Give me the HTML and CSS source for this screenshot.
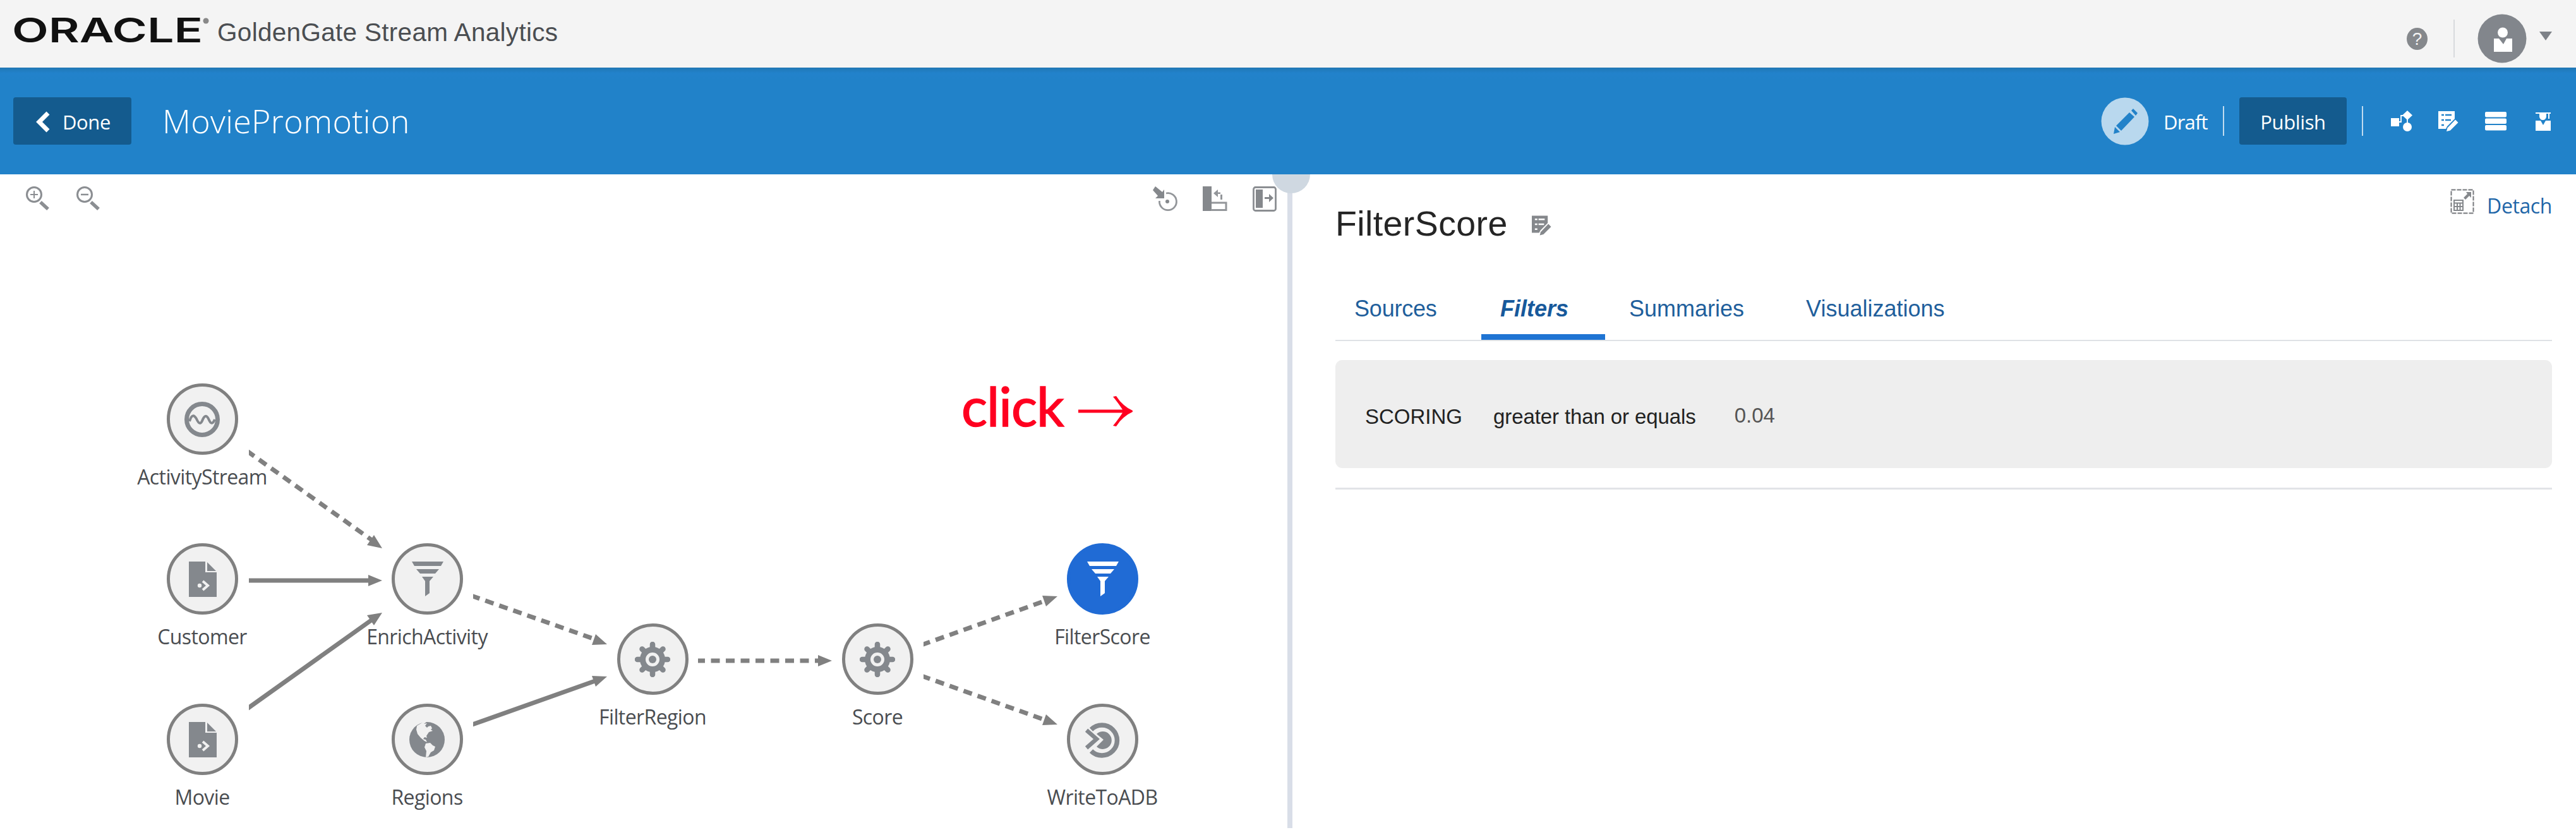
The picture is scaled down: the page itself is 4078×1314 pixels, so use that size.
FILE: index.html
```html
<!DOCTYPE html>
<html lang="en">
<head>
<meta charset="utf-8">
<title>GoldenGate Stream Analytics</title>
<link rel="stylesheet" href="styles.css">
</head>
<body>
<svg class="defs" width="0" height="0" aria-hidden="true">
  <symbol id="file" viewBox="-28 -28 56 56">
    <path d="M-21-28H5V-11H23V28H-21Z" fill="currentColor"/><path d="M8-27L22-13H8Z" fill="currentColor"/>
    <path d="M6.500-28V-12H23" fill="none" stroke="#f1f1f1" stroke-width="2"/><path d="M8-28H24V-13Z" fill="#f1f1f1"/>
    <circle cx="-4" cy="10" r="3.200" fill="#f1f1f1"/><path d="M1 3L9 10L1 17" fill="none" stroke="#f1f1f1" stroke-width="4"/>
  </symbol>
  <symbol id="funnel" viewBox="-28 -28 56 56">
    <path d="M-24-28H26L22-21H-20ZM-17-16H19L13-9H-11ZM-8-4H10L4 3V22L-3 27V3Z" fill="currentColor"/>
  </symbol>
  <symbol id="gear" viewBox="-28 -28 56 56">
    <g stroke="currentColor" stroke-width="8.500" stroke-linecap="round"><path d="M0-24V-16M0 24V16M-24 0H-16M24 0H16M-16.500-16.500L-12-12M16.500 16.500L12 12M-16.500 16.500L-12 12M16.500-16.500L12-12"/></g>
    <circle r="15.500" fill="none" stroke="currentColor" stroke-width="9"/><circle r="6" fill="currentColor"/>
  </symbol>
  <symbol id="form" viewBox="0 0 32 33">
    <path d="M0 1H26V13L14 25L12 29H0Z" fill="currentColor"/>
    <path d="M27 14.500L31.500 19L19 31.500L13 33L14.500 27.500Z" fill="currentColor"/>
    <path class="cut" d="M5 7H9M11 7H21M5 15H9M11 15H20M5 23H9" fill="none" stroke-width="2.600"/>
  </symbol>
</svg>

<header class="masthead">
  <svg class="brand" viewBox="0 0 316 60" role="img" aria-label="Oracle">
    <text x="-2" y="48" textLength="302" lengthAdjust="spacingAndGlyphs">ORACLE</text>
    <circle cx="305" cy="14" r="4.500"/>
  </svg>
  <h1 class="product">GoldenGate Stream Analytics</h1>
  <div class="account">
    <span class="help">?</span>
    <span class="rule"></span>
    <svg class="avatar" viewBox="0 0 78 78"><circle cx="39" cy="39" r="38.500" fill="#82868c"/><circle cx="40" cy="29.500" r="8" fill="#fff"/><path d="M26 39H34L41 48L46 39H55V60H26Z" fill="#fff"/></svg>
    <svg class="caret" viewBox="0 0 20 14"><path d="M0 0H20L10 14Z" fill="#7d8187"/></svg>
  </div>
</header>

<div class="titlebar">
  <button class="btn done"><svg class="chevron" viewBox="0 0 24 34"><path d="M20 3L6 17L20 31" fill="none" stroke="#fff" stroke-width="7"/></svg><span>Done</span></button>
  <h2 class="pipeline">MoviePromotion</h2>
  <div class="tools">
    <svg class="draft-icon" viewBox="0 0 76 76"><circle cx="38" cy="38" r="37.500" fill="#b9d8ee"/><path d="M45 24L53 31L32 53L24 45ZM48 21L51 18L58 25L55 29ZM22 47L30 55L20 58Z" fill="#2282c9"/></svg>
    <span class="draft">Draft</span>
    <span class="rule"></span>
    <button class="btn publish">Publish</button>
    <span class="rule second"></span>
    <svg class="tool topology" viewBox="0 0 34 34"><path d="M0 12H13V25H0Z" fill="#fff"/><path d="M26 0L34 7.500L26 15L18 7.500Z" fill="#fff"/><circle cx="26" cy="26" r="7" fill="#fff"/><path d="M12 18H16V8H22M26 12V22" fill="none" stroke="#fff" stroke-width="1.800"/></svg>
    <svg class="tool form"><use href="#form"/></svg>
    <svg class="tool rows" viewBox="0 0 34 30"><g fill="#fff"><rect width="34" height="8.500" rx="2"/><rect y="10.500" width="34" height="8.500" rx="2"/><rect y="21" width="34" height="8.500" rx="2"/></g></svg>
    <svg class="tool grad" viewBox="0 0 24 30"><path d="M0 1H24V3H0ZM6 3H17V8Q16 13 11.500 13Q7 13 6 8ZM20 3H22V11H20Z" fill="#fff"/><path d="M0 14H8L12 21L16 14H24V30H0Z" fill="#fff"/></svg>
  </div>
</div>

<main class="workspace">
  <section class="canvas">
    <div class="toolbar">
      <svg class="zoom" viewBox="0 0 38 40"><circle cx="13" cy="13" r="11.500" fill="none" stroke="#8b8e92" stroke-width="3"/><path d="M23 25L35 36" stroke="#8b8e92" stroke-width="5.500"/><path d="M13 7V19M7 13H19" stroke="#8b8e92" stroke-width="2"/></svg>
      <svg class="zoom" viewBox="0 0 38 40"><circle cx="13" cy="13" r="11.500" fill="none" stroke="#8b8e92" stroke-width="3"/><path d="M23 25L35 36" stroke="#8b8e92" stroke-width="5.500"/><path d="M7 13H19" stroke="#8b8e92" stroke-width="2.500"/></svg>
      <div class="layout-tools">
        <svg viewBox="0 0 38 40"><path d="M21 11A13.500 13.500 0 1 1 10.500 23" fill="none" stroke="#93969a" stroke-width="2.800"/><circle cx="23" cy="24" r="3" fill="#85888c"/><path d="M4 0L15 9L18 5V19H4L8 15L0 6Z" fill="#85888c"/></svg>
        <svg viewBox="0 0 38 40"><path d="M0 0H14V39H0Z" fill="#85888c"/><path d="M14 26H37V37.500H13" fill="none" stroke="#93969a" stroke-width="3"/><path d="M24 5V17L17 11ZM23 9.500H28V12H23ZM28 13H31V21H28Z" fill="#93969a"/></svg>
        <svg viewBox="0 0 38 40"><rect x="1.500" y="1.500" width="35" height="37" rx="3" fill="none" stroke="#8b8e92" stroke-width="2.800"/><path d="M5 5H16V34H5Z" fill="#85888c"/><path d="M19 17H26V12L33 18.500L26 25V20H19Z" fill="#85888c"/></svg>
      </div>
    </div>

    <svg class="edges" viewBox="0 276 2038 1038">
      <clipPath id="columns"><path d="M394 560H606V1314H394ZM749 560H962V1314H749ZM1105 560H1318V1314H1105ZM1462 560H1675V1314H1462Z"/></clipPath>
      <g clip-path="url(#columns)" fill="none" stroke="#808080" stroke-width="7">
        <g stroke-dasharray="14 9.500">
          <path d="M391 714L590 856"/><path d="M746 943L942 1012"/><path stroke-dashoffset="3" d="M1105 1046H1300"/><path d="M1459 1021L1655 951"/><path d="M1459 1070L1655 1140"/>
        </g>
        <path d="M394 919H588M390 1123L589 981M745 1148L942 1078"/>
        <g stroke="none" fill="#808080">
          <path d="M605 868L581 863L592 847ZM605 919L583 910V928ZM605 970L592 990L581 974ZM961 1020L937 1021L943 1004ZM961 1071L943 1087L937 1070ZM1317 1046L1295 1037V1055ZM1674 944L1656 960L1650 943ZM1674 1147L1650 1148L1656 1131Z"/>
        </g>
      </g>
    </svg>

    <div class="node activity"><span class="disc"><svg viewBox="-28 -28 56 56"><circle r="24.500" fill="none" stroke="currentColor" stroke-width="7"/><path d="M-20 3C-16-10-12-6-9-1C-5 8-2 8 1 0C5-8 8-6 11 1C14 8 17 7 20 0" fill="none" stroke="currentColor" stroke-width="4"/></svg></span><span class="name">ActivityStream</span></div>
    <div class="node customer"><span class="disc"><svg><use href="#file"/></svg></span><span class="name">Customer</span></div>
    <div class="node movie"><span class="disc"><svg><use href="#file"/></svg></span><span class="name">Movie</span></div>
    <div class="node enrich"><span class="disc"><svg><use href="#funnel"/></svg></span><span class="name">EnrichActivity</span></div>
    <div class="node regions"><span class="disc"><svg viewBox="-28 -28 56 56"><circle r="28" fill="currentColor"/><path d="M-16-22L-6-28L-1-28L-5-25L0-26L-3-22L0-19L2-21L6-22L8-18L6-16L9-14L3-12L1-9L-1-6L0-3L-4-4L-6-1L-2 0L0 4L-4 2L-10-3L-15-9L-17-16ZM-2 6L5 5L9 9L13 11L11 17L6 20L2 27L-2 28L-1 18L-4 12Z" fill="#f1f1f1"/></svg></span><span class="name">Regions</span></div>
    <div class="node region"><span class="disc"><svg><use href="#gear"/></svg></span><span class="name">FilterRegion</span></div>
    <div class="node score"><span class="disc"><svg><use href="#gear"/></svg></span><span class="name">Score</span></div>
    <div class="node filter selected"><span class="disc"><svg><use href="#funnel"/></svg></span><span class="name">FilterScore</span></div>
    <div class="node adb"><span class="disc"><svg viewBox="-28 -28 56 56"><path d="M-17.500-16A24 24 0 1 1-17.500 18" fill="none" stroke="currentColor" stroke-width="7.500"/><path d="M-9-9A14 14 0 1 1-9 11L2 0Z" fill="currentColor"/><path d="M-25-15L-9-1L-25 13" fill="none" stroke="currentColor" stroke-width="6.500"/></svg></span><span class="name">WriteToADB</span></div>

    <div class="hint"><span>click</span><svg viewBox="0 0 86 48"><path d="M0 21.500H70Q64 12 55 1L60 0Q70 16 86 23V25Q70 32 60 48L55 47Q64 36 70 26.500H0Z" fill="#ff0020"/></svg></div>
  </section>

  <div class="splitter"><span class="handle"></span></div>

  <section class="details">
    <div class="details-head">
      <h3>FilterScore</h3>
      <svg class="edit"><use href="#form"/></svg>
      <a class="detach"><svg viewBox="0 0 38 40"><rect x="1.500" y="1.500" width="35" height="37" fill="none" stroke="#77797d" stroke-width="2" stroke-dasharray="7 2"/><path d="M6 18H20V34H6ZM6 22.500H20M11 22V34M15.500 22V34M6 28H20" fill="none" stroke="#85888c" stroke-width="2"/><path d="M25 5H33V14L30 11L24 17L21 14L27 8Z" fill="#85888c"/></svg><span>Detach</span></a>
    </div>
    <nav class="tabs">
      <a class="tab sources">Sources</a><a class="tab active">Filters</a><a class="tab">Summaries</a><a class="tab">Visualizations</a>
    </nav>
    <div class="condition"><span class="field">SCORING</span><span class="operator">greater than or equals</span><span class="value">0.04</span></div>
    <hr class="end">
  </section>
</main>
</body>
</html>
```

FILE: styles.css
```css
* { box-sizing: border-box; }

body {
  --cut: #2282c9;
  margin: 0;
  width: 4078px;
  height: 1314px;
  overflow: hidden;
  display: flex;
  flex-direction: column;
  background: #fff;
  color: #333;
  font-family: "Liberation Sans", Arial, sans-serif;
}

h1, h2, h3 { margin: 0; font-weight: 400; }
svg { display: block; overflow: visible; flex: none; }
.defs { position: absolute; }
.cut { stroke: var(--cut); }

/* Masthead */
.masthead {
  height: 107px;
  flex: none;
  display: flex;
  padding: 0 38px 0 21px;
  background: #f4f4f4;
}
.brand { width: 316px; height: 60px; margin-top: 19px; fill: #111; }
.brand text { font: 600 53px Inter, sans-serif; }
.brand circle { fill: #888; }
.product {
  margin-left: 7px;
  font-size: 40.500px;
  line-height: 102px;
  letter-spacing: .3px;
  color: #4b4e52;
}
.account { margin-left: auto; display: flex; align-items: center; height: 122px; }
.help {
  width: 33px;
  height: 35px;
  border-radius: 50%;
  background: #85888c;
  color: #f4f4f4;
  font-size: 28px;
  line-height: 35px;
  text-align: center;
}
.account .rule { width: 2px; height: 60px; margin: 0 36px 0 41px; background: #d8dadd; }
.avatar { width: 78px; height: 78px; }
.caret { width: 20px; height: 14px; margin: -8px 0 0 20px; }

/* Pipeline title bar */
.titlebar {
  height: 169px;
  flex: none;
  display: flex;
  align-items: center;
  padding: 0 40px 0 21px;
  background: linear-gradient(#2077b4, #2282cb 9px, #2182c9 20px);
  color: #fff;
  font-family: "Open Sans", sans-serif;
}
.btn {
  height: 75px;
  padding: 2px 0 0;
  border: 0;
  border-radius: 4px;
  background: #145b8e;
  color: #fff;
  font: 400 31px "Open Sans", sans-serif;
  letter-spacing: -.4px;
}
.done { width: 187px; display: flex; align-items: center; padding-left: 35px; }
.chevron { width: 24px; height: 34px; margin-right: 19px; }
.pipeline { margin: -3px 0 0 49px; font-size: 52px; font-weight: 300; letter-spacing: .3px; }
.tools { margin-left: auto; display: flex; align-items: center; }
.draft-icon { width: 76px; height: 76px; }
.draft { margin: 3px 0 0 23px; width: 73px; font-size: 31px; letter-spacing: -.8px; }
.titlebar .rule { width: 2px; height: 47px; margin: 0 24px 0 21px; background: #c0dbef; }
.publish { width: 170px; }
.titlebar .rule.second { margin: 0 44px 0 24px; }
.topology { width: 34px; height: 34px; }
.tool.form { width: 32px; height: 33px; margin-left: 41px; }
.rows { width: 34px; height: 30px; margin-left: 42px; }
.grad { width: 24px; height: 30px; margin-left: 46px; }

/* Workspace */
.workspace { flex: 1; display: flex; min-height: 0; }
.canvas { position: relative; width: 2038px; flex: none; }
.toolbar { display: flex; gap: 42px; padding: 19px 17px 0 41px; }
.zoom { width: 38px; height: 40px; }
.layout-tools { margin-left: auto; display: flex; gap: 41px; }
.layout-tools svg { width: 38px; height: 40px; }

.edges { position: absolute; left: 0; top: 0; width: 2038px; height: 1038px; }
.node {
  position: absolute;
  width: 300px;
  margin: -57px 0 0 -150px;
  display: flex;
  flex-direction: column;
  align-items: center;
  color: #84888d;
}
.disc {
  width: 113px;
  height: 113px;
  display: flex;
  align-items: center;
  justify-content: center;
  border: 5px solid #808080;
  border-radius: 50%;
  background: #f1f1f1;
}
.disc svg { width: 56px; height: 56px; }
.name {
  margin-top: 13px;
  font: 32px/44px "Open Sans", sans-serif;
  letter-spacing: -.6px;
  color: #4a4d51;
}
.selected .disc { background: #206bd5; border-color: #206bd5; color: #fff; }
.activity { left: 320px; top: 388px; }
.customer { left: 320px; top: 641px; }
.movie { left: 320px; top: 895px; }
.enrich { left: 676px; top: 641px; }
.regions { left: 676px; top: 895px; }
.region { left: 1033px; top: 768px; }
.score { left: 1389px; top: 768px; }
.filter { left: 1745px; top: 641px; }
.adb { left: 1745px; top: 895px; }

.hint {
  position: absolute;
  left: 1522px;
  top: 314px;
  display: flex;
  align-items: center;
  color: #ff0020;
  font: 86px/104px Lato, sans-serif;
  letter-spacing: -1px;
  -webkit-text-stroke: 1.500px #ff0020;
}
.hint span { width: 185px; }
.hint svg { width: 86px; height: 48px; margin-top: 18px; }

.splitter { position: relative; width: 8px; height: 1035px; flex: none; background: #d9dee8; }
.handle {
  position: absolute;
  left: -24px;
  top: 0;
  width: 60px;
  height: 30px;
  border-radius: 0 0 30px 30px;
  background: #cfd8e1;
}

/* Stage details */
.details { flex: 1; padding: 0 38px 0 68px; }
.details-head { display: flex; height: 157px; }
.details-head h3 { font-size: 55.500px; line-height: 157px; letter-spacing: .4px; color: #252525; }
.edit { --cut: #fff; width: 31px; height: 33px; margin: 64px 0 0 38px; color: #85888c; }
.detach { margin-left: auto; display: flex; color: #1f66a8; font: 32px/44px "Open Sans", sans-serif; letter-spacing: -.4px; }
.detach svg { width: 38px; height: 40px; margin-top: 23px; }
.detach span { margin: 28px 0 0 20px; }

.tabs { display: flex; height: 107px; padding-left: 30px; border-bottom: 2px solid #dfe2e6; }
.tab { font-size: 36px; line-height: 111px; color: #1f5f9c; margin-right: 98px; }
.tab.sources { width: 132px; margin-right: 69px; letter-spacing: -.2px; }
.tab.active {
  width: 196px;
  height: 105px;
  margin-right: 38px;
  padding-left: 30px;
  border-bottom: 9px solid #1f74d3;
  font-weight: 700;
  font-style: italic;
  color: #17599b;
}
.condition {
  height: 171px;
  margin-top: 30px;
  padding: 9px 47px 0;
  display: flex;
  align-items: center;
  border-radius: 11px;
  background: #eee;
  font-size: 33px;
  color: #222;
}
.operator { margin-left: 49px; letter-spacing: -.1px; }
.value { margin: -5px 0 0 61px; color: #555; }
.end { height: 3px; margin: 31px 0 0; border: 0; background: #e2e4e7; }
```
